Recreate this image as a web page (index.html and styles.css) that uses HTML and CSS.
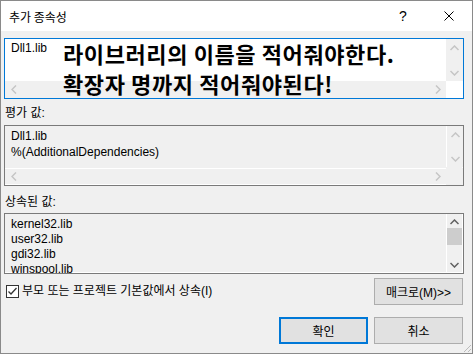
FILE: index.html
```html
<!DOCTYPE html>
<html>
<head>
    <title>추가 종속성</title>
    <link rel="stylesheet" href="styles.css">
</head>
<body>
    <div class="dialog">
        <div class="titlebar">
            <span class="title">추가 종속성</span>
            <span class="tb-btn help">?</span>
            <span class="tb-btn close">
                <svg width="10" height="10" viewBox="0 0 10 10"><path d="M0.5 0.5 L9.5 9.5 M9.5 0.5 L0.5 9.5" stroke="#000" stroke-width="1" fill="none"/></svg>
            </span>
        </div>

        <div class="content">
            <div class="box edit">
                <div class="text">Dll1.lib</div>
                <div class="vscroll">
                    <svg class="arrow" width="9" height="6" viewBox="0 0 9 6"><polyline points="0.5,5 4.5,1 8.5,5" stroke="#c5c5c5" stroke-width="1.5" fill="none"/></svg>
                    <svg class="arrow" width="9" height="6" viewBox="0 0 9 6"><polyline points="0.5,1 4.5,5 8.5,1" stroke="#c5c5c5" stroke-width="1.5" fill="none"/></svg>
                </div>
                <div class="hscroll">
                    <svg class="arrow" width="6" height="9" viewBox="0 0 6 9"><polyline points="5,0.5 1,4.5 5,8.5" stroke="#c5c5c5" stroke-width="1.5" fill="none"/></svg>
                    <svg class="arrow" width="6" height="9" viewBox="0 0 6 9"><polyline points="1,0.5 5,4.5 1,8.5" stroke="#c5c5c5" stroke-width="1.5" fill="none"/></svg>
                </div>
                <div class="corner"></div>
                <div class="note">라이브러리의 이름을 적어줘야한다.<br>확장자 명까지 적어줘야된다!</div>
            </div>

            <div class="label">평가 값:</div>
            <div class="box readonly">
                <div class="text">Dll1.lib<br>%(AdditionalDependencies)</div>
                <div class="vscroll">
                    <svg class="arrow" width="9" height="6" viewBox="0 0 9 6"><polyline points="0.5,5 4.5,1 8.5,5" stroke="#c5c5c5" stroke-width="1.5" fill="none"/></svg>
                    <svg class="arrow" width="9" height="6" viewBox="0 0 9 6"><polyline points="0.5,1 4.5,5 8.5,1" stroke="#c5c5c5" stroke-width="1.5" fill="none"/></svg>
                </div>
                <div class="hscroll">
                    <svg class="arrow" width="6" height="9" viewBox="0 0 6 9"><polyline points="5,0.5 1,4.5 5,8.5" stroke="#c5c5c5" stroke-width="1.5" fill="none"/></svg>
                    <svg class="arrow" width="6" height="9" viewBox="0 0 6 9"><polyline points="1,0.5 5,4.5 1,8.5" stroke="#c5c5c5" stroke-width="1.5" fill="none"/></svg>
                </div>
                <div class="corner"></div>
            </div>

            <div class="label second">상속된 값:</div>
            <div class="box inherited">
                <div class="list">
                    <div>kernel32.lib</div>
                    <div>user32.lib</div>
                    <div>gdi32.lib</div>
                    <div>winspool.lib</div>
                </div>
                <div class="vscroll active">
                    <svg class="arrow" width="9" height="6" viewBox="0 0 9 6"><polyline points="0.5,5 4.5,1 8.5,5" stroke="#606060" stroke-width="1.5" fill="none"/></svg>
                    <div class="thumb"></div>
                    <svg class="arrow" width="9" height="6" viewBox="0 0 9 6"><polyline points="0.5,1 4.5,5 8.5,1" stroke="#606060" stroke-width="1.5" fill="none"/></svg>
                </div>
            </div>

            <div class="options">
                <label class="check">
                    <span class="checkbox">
                        <svg width="11" height="11" viewBox="0 0 11 11"><polyline points="1.5,5.5 4,8 9.5,2" stroke="#333" stroke-width="1.3" fill="none"/></svg>
                    </span>
                    부모 또는 프로젝트 기본값에서 상속(I)
                </label>
                <button class="btn">매크로(M)&gt;&gt;</button>
            </div>

            <div class="actions">
                <button class="btn default">확인</button>
                <button class="btn">취소</button>
            </div>
        </div>
        <div class="grip"></div>
    </div>
</body>
</html>
```

FILE: styles.css
```css
body {
    margin: 0;
    font-family: "Liberation Sans", "Noto Sans CJK KR", sans-serif;
    font-size: 12px;
    color: #000;
    background: #f0f0f0;
}

.dialog {
    position: relative;
    width: 473px;
    height: 354px;
    box-sizing: border-box;
    border: 1px solid #8a8a8a;
    background-color: #f0f0f0;
}

.titlebar {
    height: 30px;
    background-color: #fff;
    display: flex;
    align-items: center;
}

.title {
    flex: 1;
    padding-left: 8px;
    font-family: "Noto Sans CJK KR", sans-serif;
    font-size: 12px;
}

.tb-btn {
    width: 46px;
    height: 30px;
    display: flex;
    align-items: center;
    justify-content: center;
}

.help {
    font-family: "Liberation Sans", sans-serif;
    font-size: 14px;
}

.content {
    padding: 7px 8px 0 3px;
}

.box {
    position: relative;
    height: 61px;
    box-sizing: border-box;
    border: 1px solid #7a7a7a;
    display: grid;
    grid-template-columns: 1fr 17px;
    grid-template-rows: 1fr 17px;
}

.edit {
    border-color: #0078d7;
    background-color: #fff;
}

.readonly,
.inherited {
    background-color: #f0f0f0;
    box-shadow: inset -1px -1px 0 #fff;
}

.inherited {
    grid-template-rows: 1fr;
}

.text {
    padding: 2px 6px;
    line-height: 16px;
}

.edit .text {
    padding-top: 1px;
}

.list {
    padding: 3px 6px 0;
    line-height: 15px;
    overflow: hidden;
}

.vscroll {
    background-color: #f0f0f0;
    display: flex;
    flex-direction: column;
    justify-content: space-between;
    align-items: center;
    padding: 6px 0 5px;
}

.readonly .vscroll,
.inherited .vscroll {
    border-left: 1px solid #fff;
    margin-bottom: 1px;
}

.inherited .vscroll {
    padding: 5px 0 4px;
    margin-right: 1px;
}

.hscroll {
    background-color: #f0f0f0;
    display: flex;
    justify-content: space-between;
    align-items: center;
    padding: 0 5px 0 6px;
}

.readonly .hscroll {
    border-top: 1px solid #fff;
    margin-bottom: 1px;
}

.corner {
    background-color: #fff;
}

.readonly .corner {
    background-color: #f0f0f0;
}

.thumb {
    width: 15px;
    height: 17px;
    background-color: #cdcdcd;
    margin: -6px 0 8px;
}

.arrow {
    display: block;
}

.note {
    position: absolute;
    left: 58px;
    top: -1px;
    font-family: "Noto Sans CJK KR", sans-serif;
    font-weight: bold;
    font-size: 22px;
    line-height: 30px;
    letter-spacing: 0.6px;
    white-space: nowrap;
}

.label {
    margin: 6px 0 4px 1px;
    height: 16px;
    line-height: 16px;
}

.label.second {
    margin: 8px 0 3px 1px;
}

.options {
    margin-top: 4px;
    display: flex;
    justify-content: space-between;
    align-items: flex-start;
    padding-right: 1px;
}

.check {
    display: flex;
    align-items: center;
    gap: 3px;
    padding: 5px 0 0 2px;
    line-height: 16px;
}

.checkbox {
    width: 13px;
    height: 13px;
    box-sizing: border-box;
    border: 1px solid #333;
    background-color: #fff;
    display: flex;
    align-items: center;
    justify-content: center;
}

.btn {
    width: 89px;
    height: 27px;
    box-sizing: border-box;
    border: 1px solid #adadad;
    background-color: #e1e1e1;
    font-family: "Liberation Sans", "Noto Sans CJK KR", sans-serif;
    font-size: 12px;
    color: #000;
    padding: 0;
}

.btn.default {
    border: 2px solid #0078d7;
}

.actions {
    margin-top: 12px;
    display: flex;
    justify-content: flex-end;
    gap: 6px;
    padding-right: 1px;
}

.grip {
    position: absolute;
    right: 1px;
    bottom: 1px;
    width: 10px;
    height: 10px;
    background: linear-gradient(135deg, transparent 60%, #bbb 60%, #bbb 68%, transparent 68%, transparent 80%, #bbb 80%, #bbb 88%, transparent 88%);
}
```
